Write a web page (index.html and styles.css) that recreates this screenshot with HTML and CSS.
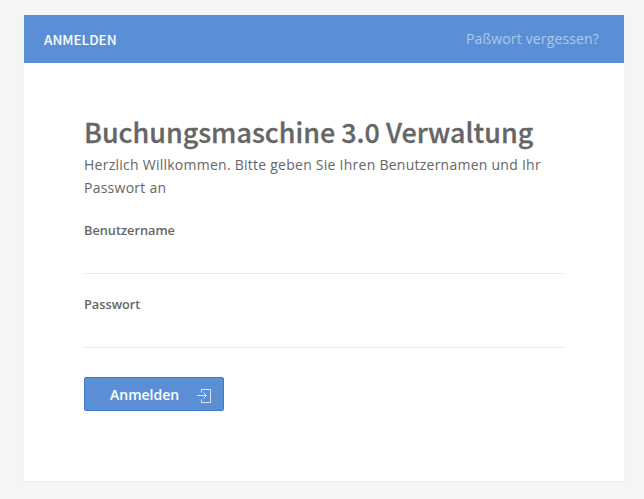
FILE: index.html
```html
<!DOCTYPE html>
<html lang="de">
<head>
<meta charset="utf-8">
<title>Anmelden</title>
<link rel="stylesheet" href="styles.css">
</head>
<body>
<main class="card">
  <header class="card-head">
    <span class="head-title">ANMELDEN</span>
    <a class="head-link" href="#">Paßwort vergessen?</a>
  </header>
  <form class="card-body">
    <h1 class="title">Buchungsmaschine 3.0 Verwaltung</h1>
    <p class="intro">Herzlich Willkommen. Bitte geben Sie Ihren Benutzernamen und Ihr Passwort an</p>
    <label class="field">
      <span class="field-label">Benutzername</span>
      <input class="field-input" type="text">
    </label>
    <label class="field">
      <span class="field-label">Passwort</span>
      <input class="field-input" type="password">
    </label>
    <button class="submit" type="button">
      <span class="submit-text">Anmelden</span>
      <svg class="submit-icon" width="15" height="15" viewBox="0 0 15 15" fill="none" stroke="currentColor" stroke-width="1">
        <path d="M4.5 4.5V1.5H13.5V14.5H4.5V11.5"/>
        <path d="M0 7.5H9M6.5 4.5L9.5 7.5L6.5 10.5"/>
      </svg>
    </button>
  </form>
</main>
</body>
</html>
```
FILE: styles.css
```css
* { box-sizing: border-box; }
html, body { margin: 0; }
body {
  background: #f5f5f5;
  padding: 15px 20px 18px 24px;
  font-family: "Open Sans", sans-serif;
  color: #666;
}
.card {
  width: 600px;
  height: 466px;
  background: #fff;
  box-shadow: 0 1px 1px rgba(0,0,0,.03);
}
.card-head {
  height: 48px;
  background: #5b8fd5;
  padding: 0 25px 1px 20px;
  display: flex;
  align-items: center;
  justify-content: space-between;
}
.head-title {
  color: #fff;
  font-family: "Noto Sans CJK SC", sans-serif;
  font-size: 13.5px;
  font-weight: 500;
}
.head-link {
  color: #adc7ea;
  font-size: 14px;
  letter-spacing: .15px;
  text-decoration: none;
}
.card-body {
  padding: 49px 60px 0;
  display: flex;
  flex-direction: column;
  align-items: stretch;
}
.title {
  margin: 0 0 1px;
  font-family: "Noto Sans CJK SC", sans-serif;
  font-size: 26.9px;
  font-weight: 500;
  -webkit-text-stroke: .3px #666;
  line-height: 40px;
  color: #666;
  white-space: nowrap;
}
.intro {
  margin: 0;
  font-size: 14px;
  line-height: 23px;
  letter-spacing: .25px;
}
.field {
  display: flex;
  flex-direction: column;
  margin-top: 22px;
  height: 53px;
}
.field + .field { margin-top: 21px; }
.field-label {
  font-size: 12.75px;
  font-weight: 600;
  line-height: 18px;
}
.field-input {
  flex: 1;
  border: 0;
  border-bottom: 1px solid #e8e8e8;
  outline: 0;
  background: transparent;
  padding: 0;
}
.submit {
  margin-top: 29px;
  align-self: flex-start;
  width: 140px;
  height: 34px;
  padding: 0 11px 0 25px;
  display: flex;
  align-items: center;
  justify-content: space-between;
  background: #5b8fd5;
  border: 1px solid #3f78c9;
  border-radius: 2px;
  color: #fff;
  font-family: "Open Sans", sans-serif;
  font-size: 14px;
  font-weight: 600;
}
.submit-icon { color: #dbe7f6; margin-top: 3px; }
```
